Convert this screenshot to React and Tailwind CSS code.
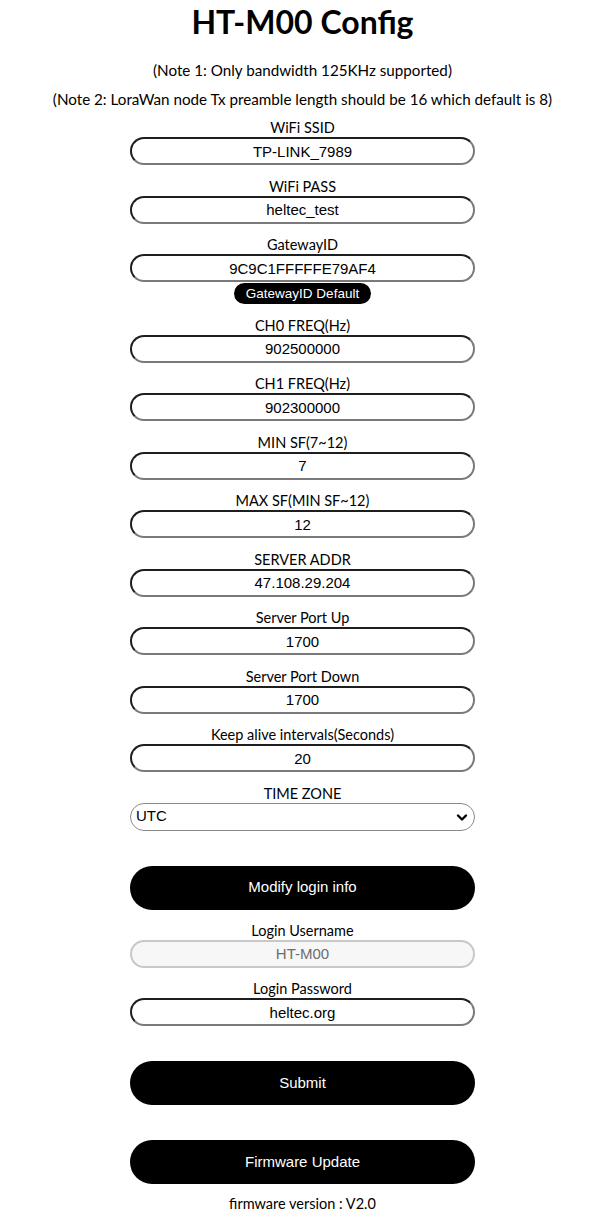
import React from "react";

const labelCls = "h-[19px] leading-[19px] text-[14.5px] text-black text-center";
const inputCls =
  "w-[345px] h-[28px] rounded-full border-2 border-t-[#1e1e1e] border-l-[#1e1e1e] border-b-[#7a7a7a] border-r-[#7a7a7a] bg-white text-center text-[15px] text-black outline-none";

function Field({ label, value, extra }) {
  return (
    <div className="flex flex-col items-center">
      <div className={labelCls} style={{ fontFamily: "Lato, 'Noto Sans', sans-serif" }}>{label}</div>
      <input
        className={inputCls}
        style={{ fontFamily: "'Liberation Sans', Arial, sans-serif" }}
        defaultValue={value}
      />
      {extra}
    </div>
  );
}

export default function App() {
  const seg = { fontFamily: "Lato, 'Noto Sans', sans-serif" };
  const arial = { fontFamily: "'Liberation Sans', Arial, sans-serif" };
  return (
    <div className="w-[605px] min-h-[1225px] bg-white flex flex-col items-center" style={seg}>
      <h1 className="h-[44px] leading-[44px] text-[32px] font-bold text-black">HT-M00 Config</h1>
      <div className="mt-[16px] h-[20px] leading-[20px] text-[15.2px] text-black">(Note 1: Only bandwidth 125KHz supported)</div>
      <div className="mt-[9px] h-[20px] leading-[20px] text-[15.2px] text-black">(Note 2: LoraWan node Tx preamble length should be 16 which default is 8)</div>

      <div className="mt-[9px] flex flex-col gap-[11.5px]">
        <Field label="WiFi SSID" value="TP-LINK_7989" />
        <Field label="WiFi PASS" value="heltec_test" />
        <Field
          label="GatewayID"
          value="9C9C1FFFFFE79AF4"
          extra={
            <button
              className="mt-[1px] h-[21px] px-[12px] rounded-full bg-black text-white text-[13.5px] leading-[21px]"
              style={arial}
            >
              GatewayID Default
            </button>
          }
        />
        <Field label="CH0 FREQ(Hz)" value="902500000" />
        <Field label="CH1 FREQ(Hz)" value="902300000" />
        <Field label="MIN SF(7~12)" value="7" />
        <Field label="MAX SF(MIN SF~12)" value="12" />
        <Field label="SERVER ADDR" value="47.108.29.204" />
        <Field label="Server Port Up" value="1700" />
        <Field label="Server Port Down" value="1700" />
        <Field label="Keep alive intervals(Seconds)" value="20" />
        <div className="flex flex-col items-center">
          <div className={labelCls}>TIME ZONE</div>
          <div className="relative w-[345px] h-[28px] rounded-full border border-[#8a8a8a] bg-white flex items-center">
            <span className="pl-[5px] text-[15px] text-black" style={arial}>UTC</span>
            <svg className="absolute right-[6px] top-[9px]" width="12" height="9" viewBox="0 0 12 9">
              <path d="M2 2.5 L6 6.5 L10 2.5" fill="none" stroke="#000" strokeWidth="2.4" strokeLinecap="round" strokeLinejoin="round" />
            </svg>
          </div>
        </div>
      </div>

      <button className="mt-[35px] w-[345px] h-[44px] rounded-full bg-black text-white text-[15px]" style={arial}>
        Modify login info
      </button>

      <div className="mt-[11px] flex flex-col gap-[11.5px]">
        <div className="flex flex-col items-center">
          <div className={labelCls}>Login Username</div>
          <input
            className="w-[345px] h-[28px] rounded-full border-2 border-[#c8c8c8] bg-[#f7f7f7] text-center text-[15px] text-[#6d6d6d] outline-none"
            style={arial}
            defaultValue="HT-M00"
            disabled
          />
        </div>
        <Field label="Login Password" value="heltec.org" />
      </div>

      <button className="mt-[35px] w-[345px] h-[44px] rounded-full bg-black text-white text-[15px]" style={arial}>
        Submit
      </button>
      <button className="mt-[35px] w-[345px] h-[44px] rounded-full bg-black text-white text-[15px]" style={arial}>
        Firmware Update
      </button>
      <div className="mt-[10px] h-[20px] leading-[20px] text-[14.5px] text-black">firmware version : V2.0</div>
    </div>
  );
}
